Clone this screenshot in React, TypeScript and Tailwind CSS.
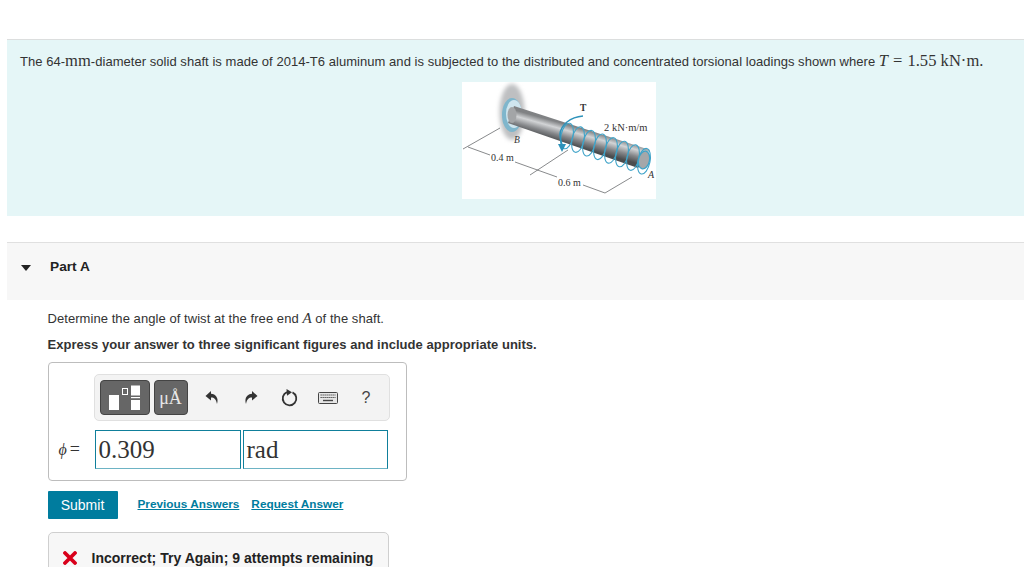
const sans = "font-['Liberation_Sans',Arial,sans-serif]";
const serif = "font-['Liberation_Serif','Times_New_Roman',serif]";

function ShaftFigure() {
  const coils = [0, 1, 2, 3, 4, 5, 6, 7];
  return (
    <svg width="194" height="117" viewBox="0 0 194 117" className="block">
      <defs>
        <linearGradient id="shaft" gradientUnits="userSpaceOnUse" x1="110" y1="44" x2="105" y2="62">
          <stop offset="0" stopColor="#808284" />
          <stop offset="0.3" stopColor="#d2d4d6" />
          <stop offset="0.65" stopColor="#85878a" />
          <stop offset="1" stopColor="#4a4c4e" />
        </linearGradient>
        <filter id="soft" x="-40%" y="-30%" width="180%" height="160%">
          <feGaussianBlur stdDeviation="2" />
        </filter>
      </defs>
      <ellipse cx="50" cy="30" rx="12.5" ry="28" fill="#bebfc1" filter="url(#soft)" />
      <ellipse cx="50" cy="33" rx="10" ry="17" fill="#7fb6cc" />
      <ellipse cx="52" cy="32" rx="8" ry="14" fill="#cfe5ee" />
      <polygon points="52,24 188,68 176,86 46,41" fill="url(#shaft)" />
      <ellipse cx="50" cy="33" rx="4.5" ry="8" fill="#a3a5a7" />
      {coils.map((i) => (
        <ellipse
          key={i}
          cx={105 + i * 11}
          cy={54 + i * 3.6}
          rx="6"
          ry="13"
          fill="none"
          stroke="#3fa3c8"
          strokeWidth="1.1"
          transform={`rotate(12 ${105 + i * 11} ${54 + i * 3.6})`}
        />
      ))}
      <ellipse cx="182" cy="78" rx="5.5" ry="9" fill="#a5a7a9" stroke="#3fa3c8" strokeWidth="1.3" transform="rotate(12 182 78)" />
      <path d="M121 34 C 108 35 99 43 98 52 C 98 57 99 60 100 63" fill="none" stroke="#2e93bb" strokeWidth="1.6" />
      <polygon points="96,62 104,62 100,70" fill="#2e93bb" />
      <path
        d="M38 46 L1 67 M6 65 L28 73 M53 80 L95 95 M121 103 L143 111 L170 95 M68 93 L106 68"
        fill="none"
        stroke="#55585a"
        strokeWidth="0.7"
      />
      <g className={serif} fill="#333">
        <text x="118" y="29" fontSize="9.5" fontWeight="700">T</text>
        <text x="142" y="49" fontSize="10.5">2 kN·m/m</text>
        <text x="52" y="61" fontSize="9.5" fontStyle="italic">B</text>
        <text x="29" y="79" fontSize="10">0.4 m</text>
        <text x="96" y="104" fontSize="10">0.6 m</text>
        <text x="186" y="96" fontSize="10" fontStyle="italic">A</text>
      </g>
    </svg>
  );
}

function TemplatesIcon() {
  return (
    <svg width="32" height="26" viewBox="0 0 32 26">
      <rect x="0" y="10" width="10" height="15" fill="#fff" />
      <rect x="13.5" y="3.5" width="5" height="6" fill="none" stroke="#fff" strokeWidth="1" />
      <rect x="22" y="0.5" width="9" height="10" fill="#fff" />
      <rect x="22" y="12" width="9" height="1.2" fill="#fff" />
      <rect x="22" y="15" width="9" height="10" fill="#fff" />
    </svg>
  );
}

function ToolbarIcons() {
  return (
    <div className="flex items-center">
      <svg width="14" height="15" viewBox="0 0 14 15" className="ml-[17px]">
        <path d="M6 1 L0.5 6 L6 10.5 V7.6 C9 7.5 11 9 12 14 C14 8 10.5 4 6 3.8 Z" fill="#333" />
      </svg>
      <svg width="14" height="15" viewBox="0 0 14 15" className="ml-[25px]">
        <path d="M8 1 L13.5 6 L8 10.5 V7.6 C5 7.5 3 9 2 14 C0 8 3.5 4 8 3.8 Z" fill="#333" />
      </svg>
      <svg width="18" height="18" viewBox="0 0 18 18" className="ml-[23px]">
        <path d="M11.5 3.4 A6.8 6.8 0 1 1 6 3.2" fill="none" stroke="#333" strokeWidth="1.8" />
        <polygon points="5.5,0 11,3.3 6,6.8" fill="#333" />
      </svg>
      <svg width="20" height="12" viewBox="0 0 20 12" className="ml-[19px]">
        <rect x="0.5" y="0.5" width="19" height="11" rx="1" fill="#e6e6e6" stroke="#444" />
        <path d="M2.5 3 H17.5 M2.5 5.5 H17.5" stroke="#444" strokeWidth="1.2" strokeDasharray="1.3 0.7" />
        <path d="M5 8.5 H15" stroke="#444" strokeWidth="1.4" />
      </svg>
      <span className={`ml-[24px] text-[16px] leading-none text-[#444] ${sans}`}>?</span>
    </div>
  );
}

export default function App() {
  return (
    <div className={`h-[567px] w-[1024px] overflow-hidden bg-white pl-[7px] pt-[39px] text-[#333] ${sans}`}>
      {/* Problem statement */}
      <div className="flex h-[177px] flex-col border-t border-[#dcdede] bg-[#e5f6f7]">
        <p className="mt-[11px] ml-[13px] whitespace-nowrap text-[13px] leading-[19px] tracking-[0.04px]">
          The 64-<span className={`${serif} text-[16.5px]`}>mm</span>-diameter solid shaft is made of 2014-T6 aluminum and is subjected to the distributed and concentrated torsional loadings shown where{" "}
          <span className={`${serif} text-[16.5px]`}>
            <i>T</i>
            <span className="mx-[5px]">=</span>1.55 kN·m.
          </span>
        </p>
        <div className="mt-[11px] ml-[455px] w-[194px] bg-white">
          <ShaftFigure />
        </div>
      </div>

      {/* Part A header */}
      <div className="mt-[26px] flex h-[58px] items-center border-t border-[#e0e0e0] bg-[#f7f7f7] pb-[8px]">
        <span className="ml-[14px] h-0 w-0 border-x-[5.5px] border-t-[6px] border-x-transparent border-t-[#222]" />
        <span className="ml-[19px] text-[13.7px] font-bold text-[#222]">Part A</span>
      </div>

      <div className="pl-[40.5px]">
        <p className="mt-[8px] text-[13px] leading-[20px] tracking-[0.06px]">
          Determine the angle of twist at the free end <i className={`${serif} text-[15px]`}>A</i> of the shaft.
        </p>
        <p className="mt-[6px] text-[13px] font-bold leading-[20px] tracking-[0.03px]">
          Express your answer to three significant figures and include appropriate units.
        </p>

        {/* Answer box */}
        <div className="mt-[7px] h-[119px] w-[359px] rounded-[4px] border border-[#bdbdbd] pt-[11px] pl-[45px]">
          <div className="flex h-[47px] w-[296px] items-center rounded-[5px] border border-[#e0e0e0] bg-[#f3f3f3] pl-[5px]">
            <div className="flex h-[35px] w-[50px] items-center justify-center rounded-[4px] border border-[#444] bg-[#666]">
              <TemplatesIcon />
            </div>
            <div className={`ml-[4px] flex h-[35px] w-[34px] items-center justify-center rounded-[4px] border border-[#444] bg-[#666] pt-[2px] text-[18px] text-[#e8e8e8] ${serif}`}>
              μÅ
            </div>
            <ToolbarIcons />
          </div>
          <div className="mt-[9px] -ml-[36px] flex items-center">
            <span className={`w-[37px] pl-[1px] text-[16px] ${serif}`}>
              <i>ϕ</i>
              <span className="ml-[3px] text-[18px]">=</span>
            </span>
            <div className={`flex h-[39px] w-[146px] items-center border border-[#0f7f9b] border-b-[#6db3c4] pl-[3px] text-[25px] text-[#333] ${serif}`}>
              0.309
            </div>
            <div className={`ml-[2px] flex h-[39px] w-[145px] items-center border border-[#0f7f9b] border-b-[#6db3c4] pl-[3px] text-[25px] text-[#333] ${serif}`}>
              rad
            </div>
          </div>
        </div>

        {/* Actions */}
        <div className="mt-[10px] flex items-center">
          <button className="h-[28px] w-[70px] rounded-[1px] bg-[#007c9e] text-[14px] text-white">Submit</button>
          <a className="ml-[20px] text-[11.8px] font-bold text-[#007c9e] underline">Previous Answers</a>
          <a className="ml-[12px] text-[11.8px] font-bold text-[#007c9e] underline">Request Answer</a>
        </div>

        {/* Feedback */}
        <div className="mt-[13px] flex h-[60px] w-[341px] items-start rounded-t-[5px] border border-[#cfcfcf] bg-[#f7f7f7] pt-[17px] pl-[14px]">
          <svg width="14" height="14" viewBox="0 0 14 14" className="mt-[1px]">
            <path d="M2 2 L12 12 M12 2 L2 12" stroke="#d9001b" strokeWidth="3.8" strokeLinecap="round" />
          </svg>
          <span className="ml-[15px] text-[14px] font-bold leading-[17px] tracking-[0.02px] text-[#222]">
            Incorrect; Try Again; 9 attempts remaining
          </span>
        </div>
      </div>
    </div>
  );
}
